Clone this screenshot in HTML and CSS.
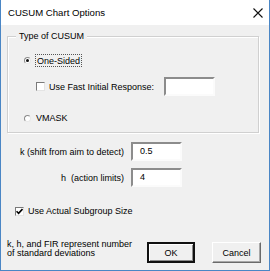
FILE: index.html
```html
<html>
	<head>
		<title>CUSUM Chart Options</title>
		<link rel="stylesheet" href="styles.css">
	</head>
	<body>
		<div class="window">
			<div class="titlebar">
				<span class="title">CUSUM Chart Options</span>
				<svg class="close" width="10" height="10" viewBox="0 0 10 10"><path d="M0.5 0.5L9.5 9.5M9.5 0.5L0.5 9.5" stroke="#111" stroke-width="1.1"/></svg>
			</div>
			<div class="content">
				<div class="group">
					<span class="legend">Type of CUSUM</span>
					<div class="opt opt-onesided"><span class="radio checked"></span><span class="focus">One-Sided</span></div>
					<div class="opt opt-fir"><span class="check"></span><span class="fir-lbl">Use Fast Initial Response:</span><span class="field"></span></div>
					<div class="opt opt-vmask"><span class="radio"></span><span class="lbl">VMASK</span></div>
				</div>
				<div class="params">
					<span class="plabel">k (shift from aim to detect)</span><span class="field">0.5</span>
					<span class="plabel">h  (action limits)</span><span class="field">4</span>
				</div>
				<div class="opt opt-subgroup">
					<span class="check"><svg width="7" height="7" viewBox="0 0 7 7"><path d="M0.5 3.2L2.6 5.4L6.5 1" fill="none" stroke="#000" stroke-width="1.6"/></svg></span>
					<span class="lbl">Use Actual Subgroup Size</span>
				</div>
				<div class="footer">
					<p class="note">k, h, and FIR represent number<br>of standard deviations</p>
					<button class="btn btn-default">OK</button>
					<button class="btn">Cancel</button>
				</div>
			</div>
		</div>
	</body>
</html>
```
FILE: styles.css
```css
body
{
	margin:0;
	font-family:"Liberation Sans", Arial, sans-serif;
	font-size:9px;
	color:#000;
	background:#fff;
}
.window
{
	width:270px;
	height:271px;
	box-sizing:border-box;
	border:1px solid #4a86c5;
	border-top:none;
	display:flex;
	flex-direction:column;
	background:#f0f0f0;
}
.titlebar
{
	height:25px;
	flex:none;
	background:#fff;
	display:flex;
	align-items:center;
	padding-left:7px;
	padding-right:6px;
}
.title
{
	font-size:9.6px;
	flex:1;
}
.close
{
	display:block;
}
.content
{
	padding:11px 8px 0 6px;
	display:flex;
	flex-direction:column;
}
.group
{
	position:relative;
	width:252px;
	height:97px;
	box-sizing:border-box;
	border:1px solid #d0d0d0;
	box-shadow:inset 1px 1px #fff, 1px 1px #fff;
	padding-top:17px;
}
.legend
{
	position:absolute;
	left:8px;
	top:-6px;
	padding:0 3px;
	background:#f0f0f0;
	line-height:11px;
}
.opt
{
	display:flex;
	align-items:center;
}
.opt-onesided
{
	height:12px;
	padding-left:16px;
}
.opt-fir
{
	height:19px;
	margin-top:11px;
	padding-left:28px;
}
.opt-vmask
{
	height:12px;
	margin-top:16px;
	padding-left:16px;
}
.radio
{
	width:7px;
	height:7px;
	border-radius:50%;
	border:1px solid;
	border-color:#8a8a8a #e8e8e8 #e8e8e8 #8a8a8a;
	background:#fff;
	display:flex;
	align-items:center;
	justify-content:center;
	margin-right:4px;
	box-sizing:border-box;
}
.radio.checked::after
{
	content:"";
	width:3px;
	height:3px;
	border-radius:50%;
	background:#111;
}
.focus
{
	border:1px dotted #555;
	padding:1px 1px 0 1px;
	line-height:10px;
}
.lbl
{
	padding-left:1px;
}
.check
{
	width:9px;
	height:9px;
	box-sizing:border-box;
	border:1px solid;
	border-color:#7a7a7a #e4e4e4 #e4e4e4 #7a7a7a;
	background:#fff;
	display:flex;
	align-items:center;
	justify-content:center;
	margin-right:4px;
}
.check svg
{
	display:block;
}
.fir-lbl
{
	width:115px;
}
.field
{
	width:51px;
	height:19px;
	box-sizing:border-box;
	border:2px solid;
	border-color:#8c8c8c #fbfbfb #fbfbfb #8c8c8c;
	background:#fff;
	padding-left:7px;
	line-height:15px;
}
.params
{
	display:grid;
	grid-template-columns:117px 51px;
	column-gap:7px;
	row-gap:7px;
	margin-top:9px;
	align-items:center;
}
.plabel
{
	text-align:right;
	white-space:pre;
}
.opt-subgroup
{
	height:12px;
	margin-top:18px;
	padding-left:8px;
}
.opt-subgroup .lbl
{
	padding-left:0;
}
.footer
{
	display:flex;
	align-items:flex-start;
	margin-top:23px;
}
.note
{
	flex:1;
	margin:0;
	line-height:8.5px;
}
.btn
{
	font-family:inherit;
	font-size:9px;
	height:21px;
	margin:2px 0 0 0;
	padding:0;
	background:#f0f0f0;
	border:1px solid;
	border-color:#fff #6a6a6a #6a6a6a #fff;
	box-shadow:inset -1px -1px #a8a8a8;
}
.btn-default
{
	width:48px;
	margin-right:17px;
	border:2px solid #000;
	border-color:#111;
	box-shadow:inset 1px 1px #fff, inset -1px -1px #8a8a8a;
}
.btn:last-child
{
	width:49px;
}
```
